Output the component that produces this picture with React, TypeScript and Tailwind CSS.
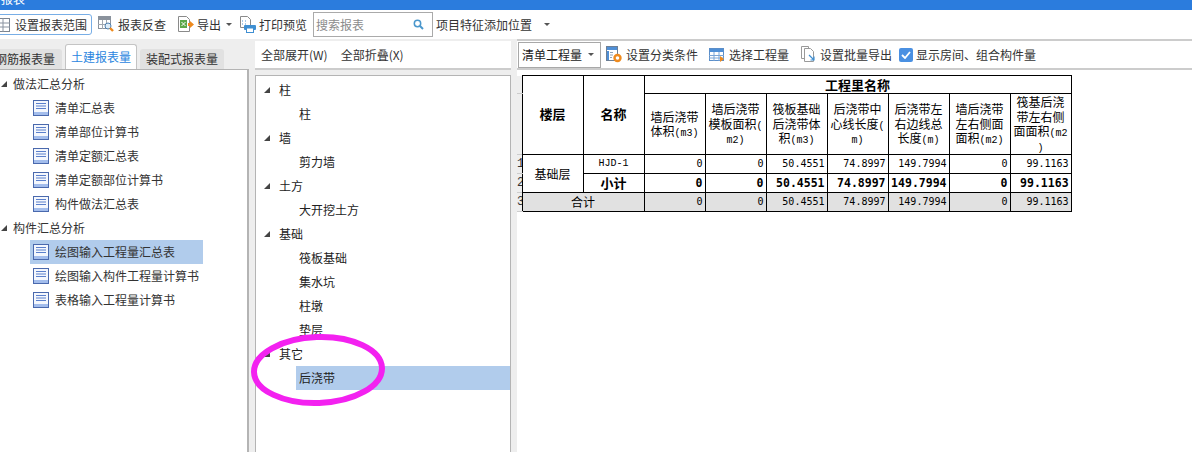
import type { ReactNode } from "react";

const cjk = "font-['Noto_Sans_CJK_SC','Microsoft_YaHei',sans-serif]";

function Caret() {
  return (
    <svg width="6" height="6" viewBox="0 0 6 6" className="shrink-0">
      <polygon points="6,0 6,6 0,6" fill="#444" />
    </svg>
  );
}

function DocIcon() {
  return (
    <svg width="16" height="16" viewBox="0 0 16 16" className="shrink-0">
      <rect x="0.5" y="0.5" width="15" height="15" fill="#f4f7fd" stroke="#4a69ad" />
      <rect x="1" y="12" width="14" height="3" fill="#a3bdec" />
      <path d="M3 3.5h10M3 6h10M3 8.5h10" stroke="#5b80cc" strokeWidth="1" />
    </svg>
  );
}

function GridSearchIcon() {
  return (
    <svg width="16" height="17" viewBox="0 0 16 17" className="shrink-0">
      <rect x="0.5" y="0.5" width="12" height="12" fill="#fff" stroke="#8a929c" />
      <rect x="1" y="1" width="11" height="3" fill="#8a929c" />
      <path d="M0 8.500h13M4.500 4v9M8.500 4v9" stroke="#a0a7b0" />
      <circle cx="10" cy="10" r="3" fill="#dcecf8" stroke="#4f7fae" />
      <path d="M12 12l3 3" stroke="#ee8a1d" strokeWidth="2.400" />
    </svg>
  );
}

function ExportIcon() {
  return (
    <svg width="17" height="17" viewBox="0 0 17 17" className="shrink-0">
      <path d="M1.500.5h8l3 3v12h-11z" fill="#fff" stroke="#8a8a8a" />
      <rect x="3" y="4" width="7" height="8" fill="#5aa84a" />
      <path d="M4.500 6l4 4M8.500 6l-4 4" stroke="#fff" />
      <path d="M11 7h2V5l4 3.500-4 3.500v-2h-2z" fill="#ee8a1d" />
    </svg>
  );
}

function PrintIcon() {
  return (
    <svg width="17" height="17" viewBox="0 0 17 17" className="shrink-0">
      <path d="M1.500.5h7l3 3v8h-10z" fill="#fff" stroke="#8a8a8a" />
      <path d="M3 5h1M6 5h1M3 8h1M6 8h1" stroke="#4f93cf" />
      <rect x="5" y="9" width="12" height="5" rx="1" fill="#3f8fd2" />
      <rect x="7.500" y="12" width="7" height="4.500" fill="#fff" stroke="#3f8fd2" />
    </svg>
  );
}

function SettingIcon() {
  return (
    <svg width="16" height="17" viewBox="0 0 16 17" className="shrink-0">
      <rect x="0.500" y="0.500" width="11" height="14" fill="#fff" stroke="#6d7f95" />
      <rect x="1" y="1" width="10" height="3" fill="#4f8fd6" />
      <path d="M2 5v9" stroke="#4f8fd6" strokeWidth="2" />
      <path d="M4 6.500h3M4 9h3M4 11.500h2" stroke="#8fa3b8" />
      <circle cx="11.500" cy="12" r="3" fill="#fff" stroke="#ee8a1d" strokeWidth="2.400" />
    </svg>
  );
}

function TableIcon() {
  return (
    <svg width="16" height="16" viewBox="0 0 16 16" className="shrink-0">
      <rect x="0.500" y="1.500" width="14" height="12" fill="#fff" stroke="#5b8ec9" />
      <rect x="1" y="2" width="13" height="3" fill="#4f8fd6" />
      <path d="M0 8.500h15M0 11h15M5 5v9M10 5v9" stroke="#7aa5d6" />
      <path d="M11 9l4 3-4 3z" fill="#ee8a1d" />
    </svg>
  );
}

function CopyIcon() {
  return (
    <svg width="15" height="17" viewBox="0 0 15 17" className="shrink-0">
      <path d="M.5.500h7v12h-7z" fill="#fff" stroke="#9a9a9a" />
      <path d="M3.500 2.500h6l3 3v10h-9z" fill="#fff" stroke="#9a9a9a" />
      <path d="M8 9l5 5M13 10.500V14H9.500" fill="none" stroke="#3f8fd2" strokeWidth="1.200" />
    </svg>
  );
}

function SearchGlyph() {
  return (
    <svg width="11" height="11" viewBox="0 0 11 11" className="shrink-0">
      <circle cx="4.500" cy="4.500" r="3.200" fill="none" stroke="#4a97cc" strokeWidth="1.500" />
      <path d="M7 7l3 3" stroke="#4a97cc" strokeWidth="2" />
    </svg>
  );
}

function DropCaret() {
  return (
    <svg width="6" height="3" viewBox="0 0 6 3" className="shrink-0">
      <polygon points="0,0 6,0 3,3" fill="#555" />
    </svg>
  );
}

function ToolButton({ icon, label, className = "" }: { icon: ReactNode; label: string; className?: string }) {
  return (
    <div className={`flex items-center shrink-0 ${className}`}>
      {icon}
      <span className="whitespace-nowrap">{label}</span>
    </div>
  );
}

function LeftTree() {
  const groups = [
    { title: "做法汇总分析", items: ["清单汇总表", "清单部位计算书", "清单定额汇总表", "清单定额部位计算书", "构件做法汇总表"] },
    { title: "构件汇总分析", items: ["绘图输入工程量汇总表", "绘图输入构件工程量计算书", "表格输入工程量计算书"] },
  ];
  return (
    <div className="pt-[2px]">
      {groups.map((g) => (
        <div key={g.title}>
          <div className="h-6 flex items-center gap-[6px] pl-[1px]">
            <Caret />
            <span>{g.title}</span>
          </div>
          {g.items.map((item) => (
            <div
              key={item}
              className={`h-6 ml-[30px] w-[173px] flex items-center gap-[6px] pl-[3px] ${
                item === "绘图输入工程量汇总表" ? "bg-[#b1ccec]" : ""
              }`}
            >
              <DocIcon />
              <span className="whitespace-nowrap">{item}</span>
            </div>
          ))}
        </div>
      ))}
    </div>
  );
}

function MidTree() {
  const groups = [
    { title: "柱", items: ["柱"] },
    { title: "墙", items: ["剪力墙"] },
    { title: "土方", items: ["大开挖土方"] },
    { title: "基础", items: ["筏板基础", "集水坑", "柱墩", "垫层"] },
    { title: "其它", items: ["后浇带"] },
  ];
  return (
    <div className="pt-[2px]">
      {groups.map((g) => (
        <div key={g.title}>
          <div className="h-6 flex items-center gap-[9px] pl-[8px]">
            <Caret />
            <span>{g.title}</span>
          </div>
          {g.items.map((item) => (
            <div
              key={item}
              className={`h-6 ml-[40px] flex items-center pl-[3px] ${item === "后浇带" ? "bg-[#b1ccec]" : ""}`}
            >
              {item}
            </div>
          ))}
        </div>
      ))}
    </div>
  );
}

const headers = [
  ["墙后浇带", "体积(m3)"],
  ["墙后浇带", "模板面积(", "m2)"],
  ["筏板基础", "后浇带体", "积(m3)"],
  ["后浇带中", "心线长度(", "m)"],
  ["后浇带左", "右边线总", "长度(m)"],
  ["墙后浇带", "左右侧面", "面积(m2)"],
  ["筏基后浇", "带左右侧", "面面积(m2", ")"],
];
const values = ["0", "0", "50.4551", "74.8997", "149.7994", "0", "99.1163"];

// latin parts of the header text are set narrower than the CJK
function HeaderLine({ text }: { text: string }) {
  const parts = text.split(/([()a-z0-9]+)/).filter(Boolean);
  return (
    <div className="whitespace-nowrap h-[14.500px]">
      {parts.map((p, i) =>
        /^[()a-z0-9]+$/.test(p) ? (
          <span key={i} className="font-['Liberation_Mono',monospace] text-[10px]">
            {p}
          </span>
        ) : (
          <span key={i}>{p}</span>
        )
      )}
    </div>
  );
}

function NumCell({ v, bold = false, grey = false }: { v: string; bold?: boolean; grey?: boolean }) {
  return (
    <td
      className={`border border-black text-right pr-[2px] p-0 whitespace-nowrap font-['DejaVu_Sans_Mono',monospace] ${
        bold ? "font-bold text-[11.500px]" : "text-[10px]"
      } ${grey ? "bg-[#e1e1e1]" : ""}`}
    >
      {v}
    </td>
  );
}

function RowNo({ n }: { n: number }) {
  return (
    <td className="p-0 bg-[#eeeeee] text-[12px] leading-none overflow-hidden border-y border-[#cccccc] font-['Liberation_Mono',monospace] text-[#333333]">
      {n}
    </td>
  );
}

function ReportTable() {
  return (
    <table className="table-fixed border-collapse w-[554.500px] text-[12px] leading-[16px] text-black">
      <colgroup>
        <col className="w-[5px]" />
        <col className="w-[61px]" />
        <col className="w-[61px]" />
        {headers.map((_, i) => (
          <col key={i} className="w-[61px]" />
        ))}
      </colgroup>
      <tbody>
        <tr className="h-[18px]">
          <td className="p-0 bg-[#eeeeee] border-b border-[#cccccc]" />
          <th rowSpan={2} className="border border-black p-0 pb-[3px] font-bold text-[13px]">楼层</th>
          <th rowSpan={2} className="border border-black p-0 pb-[3px] font-bold text-[13px]">名称</th>
          <th colSpan={7} className="border border-black p-0 font-bold text-[13px] leading-none">工程里名称</th>
        </tr>
        <tr className="h-[61px]">
          <td className="p-0 bg-[#eeeeee]" />
          {headers.map((lines, i) => (
            <td key={i} className="border border-black p-0 text-center leading-[14.500px] overflow-hidden">
              {lines.map((l, j) => (
                <HeaderLine key={j} text={l} />
              ))}
            </td>
          ))}
        </tr>
        <tr className="h-[19px]">
          <RowNo n={1} />
          <td rowSpan={2} className="border border-black p-0 text-center">基础层</td>
          <td className="border border-black p-0 text-center text-[10px] font-['Liberation_Mono',monospace]">HJD-1</td>
          {values.map((v, i) => (
            <NumCell key={i} v={v} />
          ))}
        </tr>
        <tr className="h-[19px]">
          <RowNo n={2} />
          <td className="border border-black p-0 text-center font-bold text-[13px]">小计</td>
          {values.map((v, i) => (
            <NumCell key={i} v={v} bold />
          ))}
        </tr>
        <tr className="h-[19px]">
          <RowNo n={3} />
          <td colSpan={2} className="border border-black p-0 text-center bg-[#e1e1e1]">合计</td>
          {values.map((v, i) => (
            <NumCell key={i} v={v} grey />
          ))}
        </tr>
      </tbody>
    </table>
  );
}

export default function App() {
  return (
    <div className={`relative w-[1192px] h-[452px] overflow-hidden flex flex-col bg-[#eeeeee] text-[12px] text-[#333333] ${cjk}`}>
      {/* title bar */}
      <div className="h-[10px] shrink-0 bg-[#2b7cdd] overflow-hidden text-white leading-none">
        <div className="-mt-[7px] pl-[1px]">报表</div>
      </div>

      {/* top toolbar */}
      <div className="h-[29px] shrink-0 bg-white flex items-center overflow-hidden">
        <div className="h-[21px] w-[98px] shrink-0 border border-[#78aee6] rounded-[3px] flex items-center -ml-[6px] mr-[6px]">
          <svg width="13" height="14" viewBox="0 0 13 14" className="ml-[2px] shrink-0">
            <rect x="0.500" y="0.500" width="12" height="13" fill="#fff" stroke="#7b8490" />
            <path d="M0 5h13M0 9h13M6 0v14" stroke="#8a93a0" />
          </svg>
          <span className="ml-[5px] whitespace-nowrap">设置报表范围</span>
        </div>
        <ToolButton icon={<GridSearchIcon />} label="报表反查" className="gap-[4px] mr-[11px]" />
        <ToolButton icon={<ExportIcon />} label="导出" className="gap-[3px] mr-[5px]" />
        <DropCaret />
        <div className="w-[7px] shrink-0" />
        <ToolButton icon={<PrintIcon />} label="打印预览" className="gap-[3px] mr-[6px]" />
        <div className="h-[25px] w-[120px] shrink-0 border border-[#aaaaaa] flex items-center justify-between pl-[2px] pr-[8px] text-[#8c8c8c]">
          <span>搜索报表</span>
          <SearchGlyph />
        </div>
        <span className="ml-[3px] whitespace-nowrap">项目特征添加位置</span>
        <div className="ml-[12px]">
          <DropCaret />
        </div>
      </div>

      {/* body */}
      <div className="flex-1 min-h-0 flex">
        {/* left */}
        <div className="w-[249px] shrink-0 flex flex-col">
          <div className="h-[30px] shrink-0 flex items-end overflow-hidden">
            <div className="h-[20px] w-[62px] shrink-0 bg-[#e1e1e1] rounded-tr-[3px] flex items-center justify-end pr-[7px] mr-[3px]">
              <span className="whitespace-nowrap">钢筋报表量</span>
            </div>
            <div className="h-[25px] w-[72px] shrink-0 bg-white border border-b-0 border-[#c4c4c4] rounded-t-[3px] flex items-center justify-center text-[#2b86e0] mr-[3px]">
              土建报表量
            </div>
            <div className="h-[20px] w-[84px] shrink-0 bg-[#e1e1e1] rounded-t-[3px] flex items-center justify-center">
              装配式报表量
            </div>
          </div>
          <div className="flex-1 bg-white border-t border-r-2 border-[#b4b4b4] min-h-0">
            <LeftTree />
          </div>
        </div>

        {/* middle */}
        <div className="w-[262px] shrink-0 pl-[6px] flex flex-col">
          <div className="h-[29px] mt-[2px] shrink-0 bg-white border-b-2 border-[#cccccc] flex items-center pl-[6px] gap-[13px]">
            <span className="whitespace-nowrap">全部展开(W)</span>
            <span className="whitespace-nowrap">全部折叠(X)</span>
          </div>
          <div className="flex-1 min-h-0 mt-[5px] bg-white border-x border-t border-[#b4b4b4] text-[#222222]">
            <MidTree />
          </div>
        </div>

        {/* right */}
        <div className="flex-1 min-w-0 ml-[6px] flex flex-col bg-white border-t-2 border-[#cccccc]">
          <div className="h-[29px] shrink-0 flex items-center border-b-2 border-[#cccccc]">
            <div className="ml-[1px] h-[26px] w-[83px] shrink-0 border border-[#a8a8a8] flex items-center justify-between pl-[3px] pr-[6px] text-[#222222]">
              <span className="whitespace-nowrap">清单工程量</span>
              <DropCaret />
            </div>
            <ToolButton icon={<SettingIcon />} label="设置分类条件" className="gap-[4px] ml-[5px]" />
            <ToolButton icon={<TableIcon />} label="选择工程量" className="gap-[4px] ml-[11px]" />
            <ToolButton icon={<CopyIcon />} label="设置批量导出" className="gap-[4px] ml-[12px]" />
            <div className="ml-[7px] w-[14px] h-[14px] shrink-0 rounded-[2px] bg-[#4a90e2] flex items-center justify-center">
              <svg width="10" height="8" viewBox="0 0 10 8">
                <path d="M1 4l3 3 5-6" fill="none" stroke="#fff" strokeWidth="1.800" />
              </svg>
            </div>
            <span className="ml-[3px] whitespace-nowrap">显示房间、组合构件量</span>
          </div>
          <div className="mt-[5px]">
            <ReportTable />
          </div>
        </div>
      </div>

      {/* hand drawn annotation over the tree */}
      <svg width="140" height="80" viewBox="0 0 140 80" className="absolute left-[248px] top-[330px] pointer-events-none">
        <ellipse cx="70" cy="40" rx="64" ry="33" fill="none" stroke="#f321f0" strokeWidth="6" transform="rotate(-2 70 40)" />
      </svg>
    </div>
  );
}
